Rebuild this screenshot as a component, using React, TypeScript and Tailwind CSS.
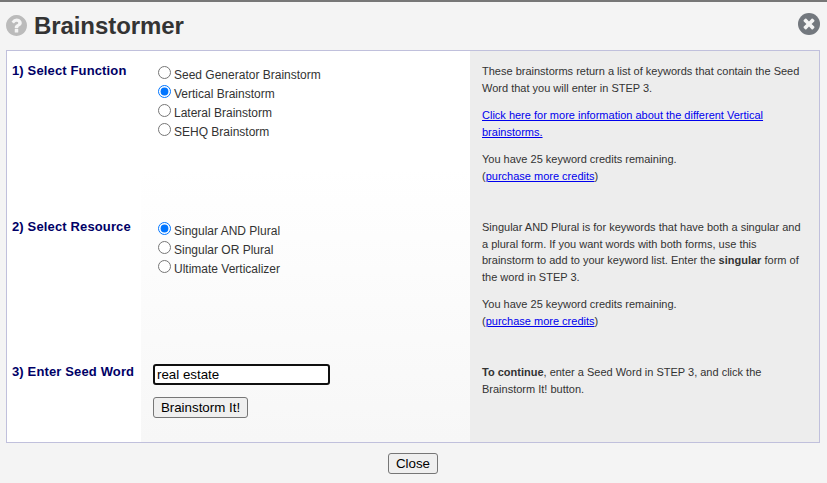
import { ReactNode } from "react";

function Choices({ name, options, selected }: { name: string; options: string[]; selected: number }) {
  return (
    <div className="pl-[17px] pt-[14px]">
      {options.map((label, i) => (
        <label key={label} className="flex h-[19px] items-start text-[12px] leading-[19px] text-[#333]">
          <input type="radio" name={name} defaultChecked={i === selected} className="mt-px mr-[3px] size-[13px]" />
          <span className="pt-px whitespace-nowrap">{label}</span>
        </label>
      ))}
    </div>
  );
}

function Heading({ children }: { children: ReactNode }) {
  return (
    <h2 className="whitespace-nowrap pt-[11px] pl-[5px] text-[13px] leading-[18px] font-bold tracking-[0.14px] text-[#000066]">
      {children}
    </h2>
  );
}

function Info({ children }: { children: ReactNode }) {
  return (
    <div className="flex flex-col gap-[11px] pt-[12px] pl-[12px] text-[11px] leading-[16.5px] whitespace-nowrap text-[#333]">
      {children}
    </div>
  );
}

function Link({ children }: { children: ReactNode }) {
  return <a href="#" className="text-[#0000ee] underline">{children}</a>;
}

function Credits() {
  return (
    <p>
      You have 25 keyword credits remaining.
      <br />(<Link>purchase more credits</Link>)
    </p>
  );
}

function HelpIcon() {
  return (
    <svg viewBox="128 128 1536 1536" className="mt-[13px] size-[21px]" fill="#bbb">
      <path d="M1024 1376v-192q0-14-9-23t-23-9h-192q-14 0-23 9t-9 23v192q0 14 9 23t23 9h192q14 0 23-9t9-23zm256-672q0-88-55.5-163t-138.5-116-170-41q-243 0-371 213-15 24 8 42l132 100q7 6 19 6 16 0 25-12 53-68 86-92 34-24 86-24 48 0 85.5 26t37.5 59q0 38-20 61t-68 45q-63 28-115.5 86.5t-52.5 125.5v36q0 14 9 23t23 9h192q14 0 23-9t9-23q0-19 21.5-49.5t54.5-49.5q32-18 49-28.5t46-35 44.5-48 28-60.5 12.5-81zm384 192q0 209-103 385.5t-279.5 279.5-385.5 103-385.5-103-279.5-279.5-103-385.5 103-385.5 279.5-279.5 385.5-103 385.5 103 279.5 279.5 103 385.5z" />
    </svg>
  );
}

function CloseIcon() {
  return (
    <svg viewBox="0 128 1536 1536" className="mt-[11px] size-[22px]">
      <circle cx="768" cy="896" r="768" fill="#73787e" />
      <path fill="#f4f4f4" d="M1149 1122q0-26-19-45l-181-181 181-181q19-19 19-45 0-27-19-46l-90-90q-19-19-46-19-26 0-45 19l-181 181-181-181q-19-19-45-19-27 0-46 19l-90 90q-19 19-19 46 0 26 19 45l181 181-181 181q-19 19-19 45 0 27 19 46l90 90q19 19 46 19 26 0 45-19l181-181 181 181q19 19 45 19 27 0 46-19l90-90q19-19 19-46z" />
    </svg>
  );
}

export default function App() {
  return (
    <div className="flex h-[483px] w-[827px] flex-col overflow-hidden border-t-2 border-[#777] bg-[#f4f4f4] font-['Liberation_Sans',Arial,sans-serif]">
      <header className="flex h-12 shrink-0 items-start justify-between pl-[6px] pr-[7px]">
        <div className="flex items-start">
          <HelpIcon />
          <h1 className="ml-[7px] mt-[9px] text-[24px] leading-[30px] font-bold tracking-[-0.08px] text-[#333]">Brainstormer</h1>
        </div>
        <CloseIcon />
      </header>
      <main className="mx-[6px] flex h-[393px] w-[814px] shrink-0 border border-[#c0c0dc]">
        <section className="grid w-[134px] grid-rows-[156px_145px_90px] bg-white">
          <Heading>1) Select Function</Heading>
          <Heading>2) Select Resource</Heading>
          <Heading>3) Enter Seed Word</Heading>
        </section>
        <section className="grid w-[329px] grid-rows-[156px_145px_90px] bg-linear-to-b from-white from-30% to-[#f7f7f7]">
          <Choices name="function" selected={1} options={["Seed Generator Brainstorm", "Vertical Brainstorm", "Lateral Brainstorm", "SEHQ Brainstorm"]} />
          <Choices name="resource" selected={0} options={["Singular AND Plural", "Singular OR Plural", "Ultimate Verticalizer"]} />
          <div className="flex flex-col items-start pt-[12px] pl-[12px]">
            <input defaultValue="real estate" className="h-[21px] w-[177px] rounded-[3px] border-2 border-[#101010] bg-white px-[2px] text-[13.333px] text-black" />
            <button className="mt-3 h-[21px] w-[95px] rounded-[3px] border border-[#767676] bg-[#efefef] text-[13.333px] leading-[19px] text-black">Brainstorm It!</button>
          </div>
        </section>
        <section className="grid w-[349px] grid-rows-[156px_145px_90px] bg-[#ededed]">
          <Info>
            <p>These brainstorms return a list of keywords that contain the Seed<br />Word that you will enter in STEP 3.</p>
            <p><Link>Click here for more information about the different Vertical<br />brainstorms.</Link></p>
            <Credits />
          </Info>
          <Info>
            <p>
              Singular AND Plural is for keywords that have both a singular and<br />
              a plural form. If you want words with both forms, use this<br />
              brainstorm to add to your keyword list. Enter the <b>singular</b> form of<br />
              the word in STEP 3.
            </p>
            <Credits />
          </Info>
          <Info>
            <p><b>To continue</b>, enter a Seed Word in STEP 3, and click the<br />Brainstorm It! button.</p>
          </Info>
        </section>
      </main>
      <footer className="flex justify-center pt-[10px] pr-px">
        <button className="h-[21px] w-[50px] rounded-[3px] border border-[#767676] bg-[#efefef] text-[13.333px] leading-[19px] text-black">Close</button>
      </footer>
    </div>
  );
}
